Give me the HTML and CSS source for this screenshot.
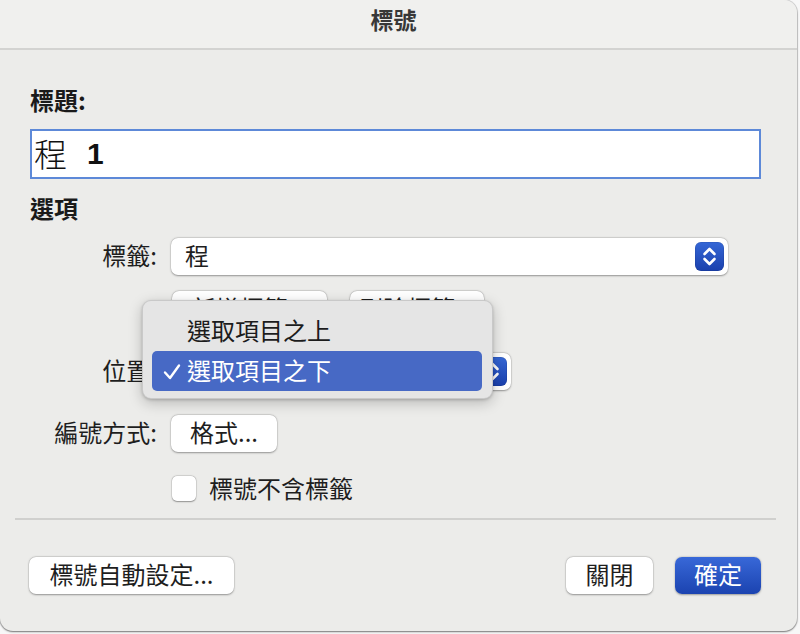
FILE: index.html
```html
<!DOCTYPE html>
<html lang="zh-Hant">
<head>
<meta charset="utf-8">
<title>標號</title>
<link rel="stylesheet" href="styles.css">
</head>
<body>
<div class="dialog">
  <div class="titlebar">標號</div>
  <div class="content">
    <div class="heading first">標題:</div>
    <div class="caption-field"><span class="cap-label">程</span><span class="cap-num">1</span></div>

    <div class="heading second">選項</div>

    <div class="form">
      <div class="row">
        <div class="label">標籤:</div>
        <div class="popup popup-wide">
          <span class="popup-text">程</span>
          <span class="stepper">
            <svg width="29" height="29" viewBox="0 0 29 29"><path d="M9.5 12 L14.5 7 L19.5 12" fill="none" stroke="#fff" stroke-width="2.6" stroke-linecap="round" stroke-linejoin="round"/><path d="M9.5 17 L14.5 22 L19.5 17" fill="none" stroke="#fff" stroke-width="2.6" stroke-linecap="round" stroke-linejoin="round"/></svg>
          </span>
        </div>
      </div>

      <div class="row row-tight">
        <div class="label"></div>
        <div class="btn-pair">
          <div class="btn btn-add">新增標籤...</div>
          <div class="btn btn-del">刪除標籤...</div>
        </div>
      </div>

      <div class="row">
        <div class="label">位置:</div>
        <div class="popup popup-pos">
          <span class="stepper">
            <svg width="29" height="29" viewBox="0 0 29 29"><path d="M9.5 12 L14.5 7 L19.5 12" fill="none" stroke="#fff" stroke-width="2.6" stroke-linecap="round" stroke-linejoin="round"/><path d="M9.5 17 L14.5 22 L19.5 17" fill="none" stroke="#fff" stroke-width="2.6" stroke-linecap="round" stroke-linejoin="round"/></svg>
          </span>
        </div>
      </div>

      <div class="row">
        <div class="label">編號方式:</div>
        <div class="btn btn-format">格式...</div>
      </div>

      <div class="row row-check">
        <div class="label"></div>
        <label class="check">
          <span class="box"></span>
          <span>標號不含標籤</span>
        </label>
      </div>
    </div>

    <div class="separator"></div>

    <div class="footer">
      <div class="btn btn-auto">標號自動設定...</div>
      <div class="footer-right">
        <div class="btn btn-close">關閉</div>
        <div class="btn btn-primary">確定</div>
      </div>
    </div>
  </div>

  <div class="menu">
    <div class="menu-item">選取項目之上</div>
    <div class="menu-item selected">
      <svg class="tick" width="20" height="20" viewBox="0 0 20 20"><path d="M3 10.5 L8 16 L17 3.5" fill="none" stroke="#fff" stroke-width="2.4" stroke-linecap="round" stroke-linejoin="round"/></svg>
      選取項目之下
    </div>
  </div>
</div>
</body>
</html>
```

FILE: styles.css
```css
* { box-sizing: border-box; }

html, body {
  margin: 0;
  padding: 0;
  width: 800px;
  height: 634px;
  overflow: hidden;
  background: #f7f7f7;
}

.dialog {
  position: relative;
  width: 797px;
  height: 631px;
  background: #ececea;
  border-radius: 0 13px 13px 13px;
  box-shadow: 0 1px 2px rgba(0, 0, 0, 0.45), 0 0 0 1px rgba(0, 0, 0, 0.12);
  overflow: hidden;
  font-family: "Noto Sans CJK TC", "Noto Sans", sans-serif;
  font-size: 24px;
  color: #1e1e1e;
}

.titlebar {
  height: 50px;
  background: #f0f0ee;
  border-bottom: 2px solid #d3d3d1;
  display: flex;
  justify-content: center;
  align-items: center;
  padding: 0 10px 10px 0;
  font-weight: 700;
  font-size: 23px;
  color: #383838;
}

.content {
  padding: 0 36px 0 30px;
}

.heading {
  font-weight: 700;
  font-size: 24px;
  line-height: 26px;
  color: #1a1a1a;
}
.heading.first { margin-top: 37px; }
.heading.second { margin-top: 16px; }

.caption-field {
  margin-top: 16px;
  height: 50px;
  background: #fff;
  border: 2px solid #5d89d8;
  display: flex;
  align-items: center;
  padding-left: 2px;
  padding-bottom: 2px;
  font-size: 33px;
  line-height: 1;
  color: #111;
}
.cap-label { font-weight: 300; }
.cap-num {
  font-family: "Liberation Sans", sans-serif;
  font-weight: 700;
  font-size: 30px;
  margin-left: 20px;
  margin-top: 2px;
}

.form {
  margin-top: 17px;
}

.row {
  display: flex;
  align-items: center;
  height: 37px;
  margin-top: 25px;
}
.row:first-child { margin-top: 0; }
.row.row-tight { margin-top: 16px; }
.row.row-check { margin-top: 24px; height: 25px; }

.label {
  width: 127px;
  margin-right: 14px;
  text-align: right;
  line-height: 33px;
  padding-bottom: 4px;
  white-space: nowrap;
}

.popup {
  position: relative;
  height: 37px;
  background: #fff;
  border-radius: 7px;
  box-shadow: 0 0.5px 2px rgba(0, 0, 0, 0.35), 0 0 0 0.5px rgba(0, 0, 0, 0.08);
  display: flex;
  align-items: center;
  padding-left: 14px;
  padding-bottom: 4px;
}
.popup-wide { width: 557px; }
.popup-pos { width: 340px; }

.popup-text { line-height: 1; }

.stepper {
  position: absolute;
  right: 4px;
  top: 4px;
  width: 29px;
  height: 29px;
  border-radius: 6px;
  background: linear-gradient(#3567d6, #1a40ad);
  box-shadow: inset 0 0 0 0.5px rgba(0, 0, 0, 0.15);
}
.stepper svg { display: block; }

.btn {
  height: 37px;
  background: #fff;
  border-radius: 7px;
  box-shadow: 0 0.5px 2px rgba(0, 0, 0, 0.35), 0 0 0 0.5px rgba(0, 0, 0, 0.08);
  display: flex;
  justify-content: center;
  align-items: center;
  padding-bottom: 3px;
  line-height: 1;
  white-space: nowrap;
}

.btn-pair {
  display: flex;
  gap: 23px;
  margin-left: 1px;
}
.btn-add { width: 155px; }
.btn-del { width: 134px; }
.btn-format { width: 106px; }

.check {
  display: flex;
  align-items: center;
  gap: 13px;
  margin-left: 1px;
  line-height: 1;
}
.check span:last-child { padding-bottom: 2px; }
.box {
  width: 24px;
  height: 25px;
  background: #fff;
  border-radius: 5px;
  box-shadow: 0 0.5px 1.5px rgba(0, 0, 0, 0.35), 0 0 0 0.5px rgba(0, 0, 0, 0.12);
}

.separator {
  margin: 17px -15px 0 -15px;
  height: 2px;
  background: #d0d0ce;
}

.footer {
  margin-top: 37px;
  display: flex;
  justify-content: space-between;
  align-items: center;
}
.footer-right {
  display: flex;
  gap: 22px;
}
.btn-auto { width: 205px; margin-left: -1px; }
.btn-close { width: 87px; }
.btn-primary {
  width: 86px;
  background: linear-gradient(#3868d8, #1b43b0);
  color: #fff;
  box-shadow: 0 0.5px 2px rgba(0, 0, 0, 0.35);
}

/* open pop-up menu of the position field */
.menu {
  position: absolute;
  left: 142px;
  top: 300px;
  width: 351px;
  height: 99px;
  padding: 10px 10px 9px 9px;
  background: #e5e5e5;
  border-radius: 9px;
  border: 1px solid rgba(0, 0, 0, 0.12);
  box-shadow: 0 4px 14px rgba(0, 0, 0, 0.22), 0 1px 3px rgba(0, 0, 0, 0.18);
}
.menu-item {
  position: relative;
  height: 40px;
  display: flex;
  align-items: center;
  padding-left: 35px;
  padding-bottom: 2px;
  border-radius: 5px;
  line-height: 1;
  color: #1c1c1c;
}
.menu-item.selected {
  background: #4769c5;
  color: #fff;
}
.tick {
  position: absolute;
  left: 10px;
  top: 11px;
}
```
